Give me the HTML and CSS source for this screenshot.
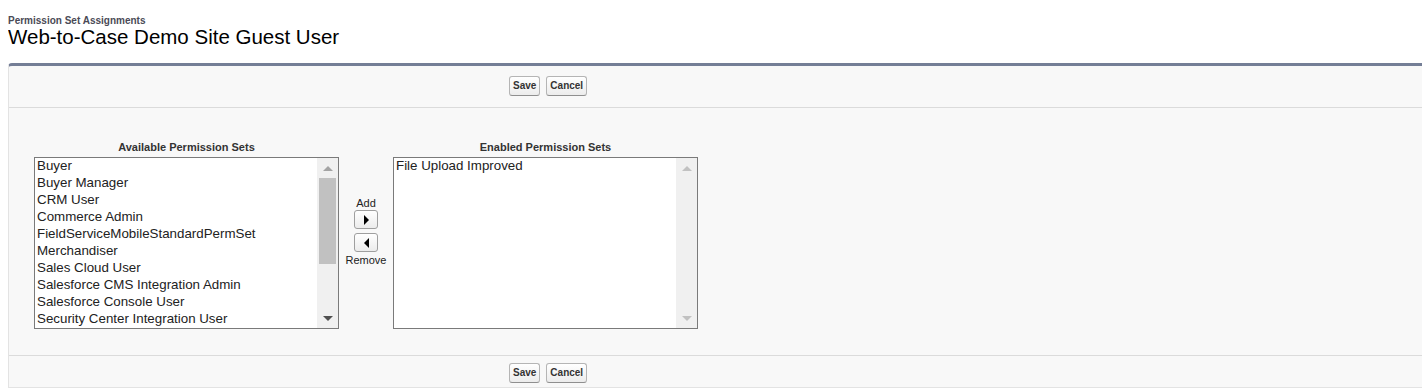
FILE: index.html
```html
<!DOCTYPE html>
<html lang="en">
<head>
    <meta charset="UTF-8">
    <title>Permission Set Assignments</title>
    <link rel="stylesheet" href="styles.css">
</head>
<body>
    <!-- Page heading -->
    <div class="page-head">
        <div class="page-type">Permission Set Assignments</div>
        <h1 class="page-title">Web-to-Case Demo Site Guest User</h1>
    </div>

    <div class="page-block">
        <div class="btn-row btn-row-top">
            <button class="btn">Save</button>
            <button class="btn">Cancel</button>
        </div>

        <div class="block-body">
            <div class="dueling">
                <!-- Available list -->
                <div class="list-col">
                    <div class="list-label">Available Permission Sets</div>
                    <div class="listbox">
                        <div class="options">
                            <div class="option">Buyer</div>
                            <div class="option">Buyer Manager</div>
                            <div class="option">CRM User</div>
                            <div class="option">Commerce Admin</div>
                            <div class="option">FieldServiceMobileStandardPermSet</div>
                            <div class="option">Merchandiser</div>
                            <div class="option">Sales Cloud User</div>
                            <div class="option">Salesforce CMS Integration Admin</div>
                            <div class="option">Salesforce Console User</div>
                            <div class="option">Security Center Integration User</div>
                        </div>
                        <div class="scrollbar">
                            <div class="sb-btn"><span class="tri-up"></span></div>
                            <div class="sb-track"><div class="sb-thumb"></div></div>
                            <div class="sb-btn"><span class="tri-down"></span></div>
                        </div>
                    </div>
                </div>

                <!-- Add / Remove -->
                <div class="mover">
                    <div class="mover-label">Add</div>
                    <div class="arrow-btn"><span class="tri-right"></span></div>
                    <div class="arrow-btn"><span class="tri-left"></span></div>
                    <div class="mover-label">Remove</div>
                </div>

                <!-- Enabled list -->
                <div class="list-col">
                    <div class="list-label">Enabled Permission Sets</div>
                    <div class="listbox">
                        <div class="options">
                            <div class="option">File Upload Improved</div>
                        </div>
                        <div class="scrollbar disabled">
                            <div class="sb-btn"><span class="tri-up"></span></div>
                            <div class="sb-track"></div>
                            <div class="sb-btn"><span class="tri-down"></span></div>
                        </div>
                    </div>
                </div>
            </div>
        </div>

        <div class="btn-row btn-row-bottom">
            <button class="btn">Save</button>
            <button class="btn">Cancel</button>
        </div>
    </div>
</body>
</html>
```

FILE: styles.css
```css
body{
    margin: 0 0 0 8px;
    font-family: "Liberation Sans", Arial, sans-serif;
    color: #000;
    background-color: #fff;
    overflow: hidden;
}

.page-head{
    padding-top: 15px;
}

.page-type{
    font-size: 10px;
    line-height: 11px;
    font-weight: bold;
    color: #4a4a56;
}

.page-title{
    margin: 0;
    font-size: 20.5px;
    line-height: 22px;
    font-weight: normal;
    color: #000;
}

.page-block{
    margin-top: 15px;
    background-color: #f8f8f8;
    border-top: 3px solid #747e96;
    border-left: 1px solid #e3e3e3;
    border-bottom: 1px solid #e3e3e3;
    border-top-left-radius: 4px;
}

.btn-row{
    display: flex;
    gap: 6px;
    padding-left: 500px;
}

.btn-row-top{
    padding-top: 10px;
    padding-bottom: 11px;
    border-bottom: 1px solid #dbdbdb;
}

.btn-row-bottom{
    padding-top: 7px;
    padding-bottom: 4px;
    border-top: 1px solid #dbdbdb;
}

.btn{
    height: 20px;
    padding: 2px 3px;
    font-family: "Liberation Sans", Arial, sans-serif;
    font-size: 10px;
    line-height: 14px;
    font-weight: bold;
    color: #333;
    background: linear-gradient(#ffffff, #ececec);
    border: 1px solid #b5b5b5;
    border-bottom-color: #8f8f8f;
    border-radius: 3px;
}

.block-body{
    padding: 33px 0 26px 25px;
}

.dueling{
    display: flex;
}

.list-col{
    width: 305px;
}

.list-label{
    font-size: 11px;
    line-height: 13px;
    font-weight: bold;
    color: #333;
    text-align: center;
    margin-bottom: 3px;
}

.listbox{
    display: flex;
    height: 172px;
    box-sizing: border-box;
    border: 1px solid #7a7a7a;
    background-color: #fff;
}

.options{
    flex: 1;
    padding-left: 2px;
}

.option{
    height: 17px;
    font-size: 13.33px;
    line-height: 15px;
    color: #222;
    white-space: nowrap;
}

.scrollbar{
    width: 21px;
    display: flex;
    flex-direction: column;
    background-color: #f0f0f0;
}

.sb-btn{
    height: 20px;
    display: flex;
    align-items: center;
    justify-content: center;
}

.sb-track{
    flex: 1;
    padding: 0 2px;
}

.sb-thumb{
    height: 86px;
    background-color: #c1c1c1;
}

.tri-up{
    width: 0;
    height: 0;
    border-left: 5px solid transparent;
    border-right: 5px solid transparent;
    border-bottom: 5px solid #a3a3a3;
}

.tri-down{
    width: 0;
    height: 0;
    border-left: 5px solid transparent;
    border-right: 5px solid transparent;
    border-top: 5px solid #505050;
}

.scrollbar.disabled .tri-up{
    border-bottom-color: #c1c1c1;
}

.scrollbar.disabled .tri-down{
    border-top-color: #c1c1c1;
}

.mover{
    width: 54px;
    padding-top: 56px;
    display: flex;
    flex-direction: column;
    align-items: center;
}

.mover-label{
    font-size: 11px;
    line-height: 13px;
    color: #222;
}

.arrow-btn{
    width: 24px;
    height: 19px;
    box-sizing: border-box;
    margin-bottom: 4px;
    display: flex;
    align-items: center;
    justify-content: center;
    background: linear-gradient(#ffffff, #ececec);
    border: 1px solid #9f9f9f;
    border-radius: 3px;
}

.arrow-btn + .mover-label{
    margin-top: -2px;
}

.tri-right{
    width: 0;
    height: 0;
    border-top: 5px solid transparent;
    border-bottom: 5px solid transparent;
    border-left: 5px solid #000;
}

.tri-left{
    width: 0;
    height: 0;
    border-top: 5px solid transparent;
    border-bottom: 5px solid transparent;
    border-right: 5px solid #000;
}
```
